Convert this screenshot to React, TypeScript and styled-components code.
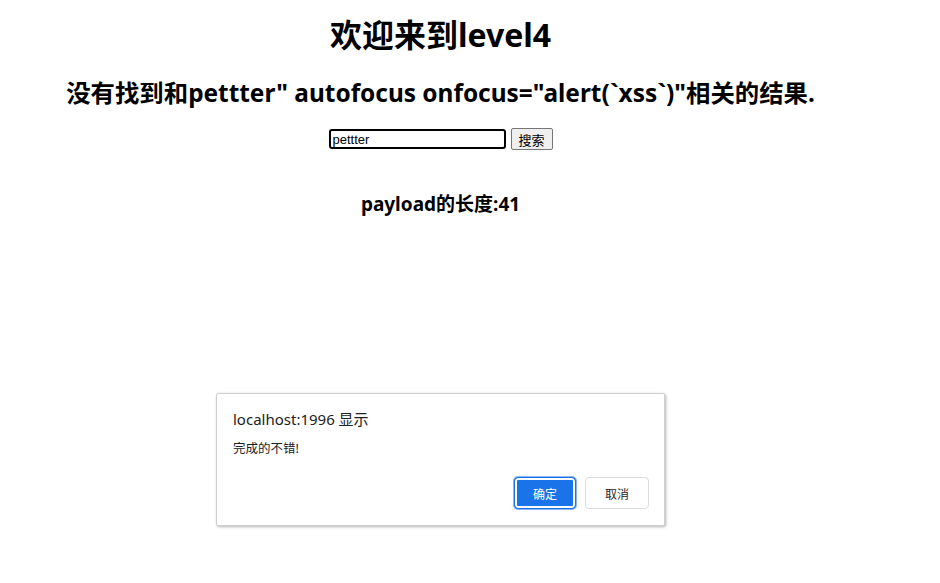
import React from "react";
import styled, { createGlobalStyle } from "styled-components";

const Global = createGlobalStyle`
  html, body { margin: 0; padding: 0; background: #fff; }
  body { font-family: "Noto Sans", "Noto Sans CJK SC", sans-serif; color: #000; }
`;

const Page = styled.div`
  position: relative;
  width: 940px;
  height: 583px;
  overflow: hidden;
`;

const Content = styled.div`
  width: 881px;
  padding-top: 15px;
  display: flex;
  flex-direction: column;
  align-items: center;
  text-align: center;
`;

const Title = styled.h1`
  margin: 0;
  font-size: 32px;
  line-height: 40px;
  font-weight: 700;
`;

const Result = styled.h2`
  margin: 22px 0 0;
  font-size: 24.4px;
  line-height: 32px;
  font-weight: 700;
  white-space: nowrap;
`;

const SearchForm = styled.form`
  margin-top: 19px;
  display: flex;
  align-items: center;
  gap: 5px;
  height: 22px;
`;

const SearchInput = styled.input`
  box-sizing: border-box;
  width: 177px;
  height: 20px;
  border: 2px solid #000;
  border-radius: 3px;
  padding: 0 2px;
  font-family: "Liberation Sans", Arial, sans-serif;
  font-size: 13px;
  color: #000;
  outline: none;
  background: #fff;
`;

const SearchButton = styled.button`
  box-sizing: border-box;
  width: 42px;
  height: 22px;
  padding: 0;
  border: 1px solid #767676;
  border-radius: 2px;
  background: #efefef;
  font-family: "Noto Sans CJK SC", sans-serif;
  font-size: 13px;
  color: #000;
`;

const Length = styled.h3`
  margin: 41px 0 0;
  font-size: 19px;
  line-height: 26px;
  font-weight: 700;
`;

const Dialog = styled.div`
  position: absolute;
  left: 216px;
  top: 393px;
  width: 449px;
  height: 133px;
  box-sizing: border-box;
  background: #fff;
  border: 1px solid #cfcfcf;
  border-radius: 2px;
  box-shadow: 1px 1px 3px rgba(0, 0, 0, 0.3);
  padding: 14px 15px 16px 16px;
  display: flex;
  flex-direction: column;
  font-family: "Noto Sans", "Noto Sans CJK SC", sans-serif;
`;

const DialogTitle = styled.div`
  font-size: 15px;
  line-height: 22px;
  color: #202124;
`;

const DialogMessage = styled.div`
  margin-top: 10px;
  font-size: 12.5px;
  line-height: 18px;
  color: #202124;
`;

const DialogActions = styled.div`
  margin-top: auto;
  display: flex;
  justify-content: flex-end;
  gap: 9px;
`;

const DialogButton = styled.button<{ $primary?: boolean }>`
  box-sizing: border-box;
  height: 32px;
  width: ${(p) => (p.$primary ? "62px" : "64px")};
  padding: 0;
  border-radius: 4px;
  font-family: "Noto Sans CJK SC", sans-serif;
  font-size: 12px;
  cursor: pointer;
  ${(p) =>
    p.$primary
      ? `background: #1a73e8; color: #fff; border: 1px solid #1a73e8; box-shadow: 0 0 0 2px #fff inset, 0 0 0 1px #8ab4f8; outline: none;`
      : `background: #fff; color: #1f1f1f; border: 1px solid #dadce0;`}
`;

export default function App() {
  return (
    <Page>
      <Global />
      <Content>
        <Title>欢迎来到level4</Title>
        <Result>没有找到和pettter" autofocus onfocus="alert(`xss`)"相关的结果.</Result>
        <SearchForm onSubmit={(e) => e.preventDefault()}>
          <SearchInput defaultValue="pettter" />
          <SearchButton type="button">搜索</SearchButton>
        </SearchForm>
        <Length>payload的长度:41</Length>
      </Content>
      <Dialog>
        <DialogTitle>localhost:1996 显示</DialogTitle>
        <DialogMessage>完成的不错!</DialogMessage>
        <DialogActions>
          <DialogButton $primary>确定</DialogButton>
          <DialogButton>取消</DialogButton>
        </DialogActions>
      </Dialog>
    </Page>
  );
}
